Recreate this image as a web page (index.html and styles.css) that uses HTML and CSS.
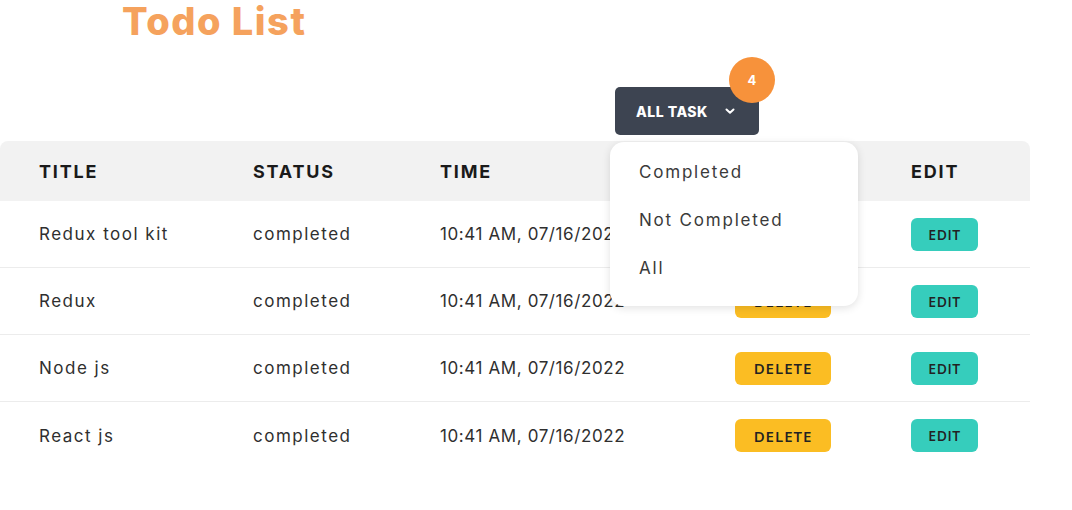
FILE: index.html
```html
<!DOCTYPE html>
<html>
<head>
<meta charset="utf-8">
<link rel="stylesheet" href="styles.css">
</head>
<body>
<div class="page">
  <h1 class="title">Todo List</h1>
  <div class="toolbar">
    <div class="filter">
      <button class="filter-btn">ALL TASK
        <svg class="chev" width="12" height="12" viewBox="0 0 12 12"><path d="M2.5 4.5 L6 7.8 L9.5 4.5" fill="none" stroke="#fff" stroke-width="2" stroke-linecap="round" stroke-linejoin="round"/></svg>
      </button>
      <span class="badge">4</span>
      <ul class="menu">
        <li>Completed</li>
        <li>Not Completed</li>
        <li>All</li>
      </ul>
    </div>
  </div>
  <div class="table">
    <div class="row head">
      <div>TITLE</div><div>STATUS</div><div>TIME</div><div>DELETE</div><div>EDIT</div>
    </div>
    <div class="row">
      <div>Redux tool kit</div><div>completed</div><div class="time">10:41 AM, 07/16/2022</div><div><span class="btn del">DELETE</span></div><div><span class="btn edit">EDIT</span></div>
    </div>
    <div class="row">
      <div>Redux</div><div>completed</div><div class="time">10:41 AM, 07/16/2022</div><div><span class="btn del">DELETE</span></div><div><span class="btn edit">EDIT</span></div>
    </div>
    <div class="row">
      <div>Node js</div><div>completed</div><div class="time">10:41 AM, 07/16/2022</div><div><span class="btn del">DELETE</span></div><div><span class="btn edit">EDIT</span></div>
    </div>
    <div class="row last">
      <div>React js</div><div>completed</div><div class="time">10:41 AM, 07/16/2022</div><div><span class="btn del">DELETE</span></div><div><span class="btn edit">EDIT</span></div>
    </div>
  </div>
</div>
</body>
</html>
```
FILE: styles.css
```css
* { box-sizing: border-box; }
html, body { margin: 0; padding: 0; background: #fff; }
body { font-family: Inter, "Open Sans", sans-serif; color: #2a2a2a; }
.page { width: 1072px; }
.title {
  margin: 0;
  padding: 0 0 0 122px;
  height: 42px;
  line-height: 42px;
  font-size: 38px;
  font-weight: 800;
  color: #f5a25d;
  letter-spacing: 1.5px;
}
.toolbar {
  height: 99px;
  padding: 45px 0 0 615px;
}
.filter { position: relative; width: 144px; }
.filter-btn {
  width: 144px;
  height: 48px;
  border: 0;
  border-radius: 5px;
  background: #3d4451;
  color: #fff;
  font-family: Inter, sans-serif;
  font-weight: 800;
  font-size: 14px;
  display: flex;
  align-items: center;
  padding: 0 0 0 21px;
  gap: 16px;
  letter-spacing: 0.5px;
}
.badge {
  position: absolute;
  left: 114px;
  top: -30px;
  width: 46px;
  height: 46px;
  border-radius: 50%;
  background: #f7923b;
  color: #fff;
  font-weight: 700;
  font-size: 13px;
  display: flex;
  align-items: center;
  justify-content: center;
}
.menu {
  position: absolute;
  left: -5px;
  top: 55px;
  width: 248px;
  margin: 0;
  padding: 10px 0;
  list-style: none;
  background: #fff;
  border-radius: 14px;
  box-shadow: 0 2px 8px rgba(0,0,0,0.12);
  z-index: 5;
}
.menu li {
  padding: 0 0 0 29px;
  height: 48px;
  line-height: 40px;
  font-size: 17px;
  letter-spacing: 1.8px;
  color: #3a3a3a;
}
.table { width: 1030px; }
.row {
  display: grid;
  grid-template-columns: 214px 187px 295px 176px 1fr;
  padding-left: 39px;
  height: 67px;
  align-items: center;
  border-bottom: 1px solid #ececec;
  font-size: 17px;
  letter-spacing: 1.5px;
  color: #2f2f2f;
}
.row .time { letter-spacing: 0.6px; }
.row.last { border-bottom: 0; }
.head {
  height: 60px;
  background: #f2f2f2;
  border-radius: 8px 8px 0 0;
  border-bottom: 0;
  font-weight: 700;
  font-size: 18px;
  letter-spacing: 1.8px;
  color: #1a1a1a;
}
.btn {
  display: inline-flex;
  align-items: center;
  justify-content: center;
  height: 33px;
  border-radius: 6px;
  font-family: "Open Sans", sans-serif;
  font-weight: 600;
  font-size: 15px;
  letter-spacing: 1px;
  color: #222;
}
.del { width: 96px; background: #fbbd23; }
.edit { width: 67px; background: #36cdbc; font-size: 14px; letter-spacing: 0.5px; }
```
